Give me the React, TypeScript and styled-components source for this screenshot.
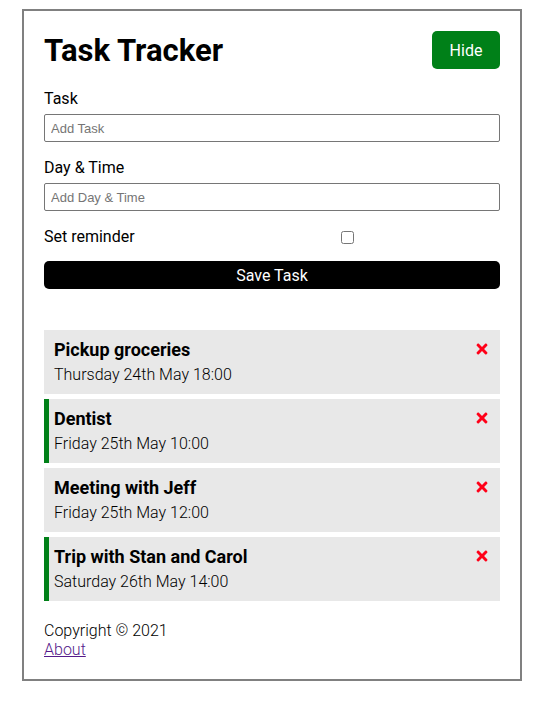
import React, { useState } from "react";
import styled, { createGlobalStyle } from "styled-components";
import { FaTimes } from "react-icons/fa";

const GlobalStyle = createGlobalStyle`
  body {
    margin: 0;
    font-family: Roboto, "Liberation Sans", sans-serif;
    background: #fff;
  }
  * {
    box-sizing: border-box;
  }
`;

type Task = {
  id: number;
  text: string;
  day: string;
  reminder: boolean;
};

const initialTasks: Task[] = [
  { id: 1, text: "Pickup groceries", day: "Thursday 24th May 18:00", reminder: false },
  { id: 2, text: "Dentist", day: "Friday 25th May 10:00", reminder: true },
  { id: 3, text: "Meeting with Jeff", day: "Friday 25th May 12:00", reminder: false },
  { id: 4, text: "Trip with Stan and Carol", day: "Saturday 26th May 14:00", reminder: true },
];

const App: React.FC = () => {
  const [tasks, setTasks] = useState<Task[]>(initialTasks);

  const deleteTask = (id: number) => {
    setTasks(tasks.filter((task) => task.id !== id));
  };

  return (
    <>
      <GlobalStyle />
      <Container>
        <Header>
          <Title>Task Tracker</Title>
          <HideButton>Hide</HideButton>
        </Header>
        <Form onSubmit={(e) => e.preventDefault()}>
          <FormControl>
            <Label>Task</Label>
            <Input type="text" placeholder="Add Task" />
          </FormControl>
          <FormControl>
            <Label>Day &amp; Time</Label>
            <Input type="text" placeholder="Add Day &amp; Time" />
          </FormControl>
          <CheckControl>
            <CheckLabel>Set reminder</CheckLabel>
            <Checkbox type="checkbox" />
          </CheckControl>
          <SaveButton type="submit">Save Task</SaveButton>
        </Form>
        <TaskList>
          {tasks.map((task) => (
            <TaskItem key={task.id} $reminder={task.reminder}>
              <TaskTitle>
                {task.text}
                <DeleteIcon onClick={() => deleteTask(task.id)} />
              </TaskTitle>
              <TaskDay>{task.day}</TaskDay>
            </TaskItem>
          ))}
        </TaskList>
        <Footer>
          <p>Copyright &copy; 2021</p>
          <FooterLink href="#about">About</FooterLink>
        </Footer>
      </Container>
    </>
  );
};

const Container = styled.div`
  width: 500px;
  margin: 9px 0 20px 22px;
  padding: 20px;
  border: 2px solid #808080;
`;

const Header = styled.header`
  display: flex;
  justify-content: space-between;
  align-items: center;
  height: 38px;
  margin-bottom: 20px;
`;

const Title = styled.h1`
  margin: 0;
  font-size: 31px;
  font-weight: 700;
  color: #000;
`;

const HideButton = styled.button`
  width: 68px;
  height: 38px;
  border: none;
  border-radius: 5px;
  background: #008018;
  color: #fff;
  font-family: Roboto, sans-serif;
  font-size: 16px;
  cursor: pointer;
`;

const Form = styled.form`
  display: flex;
  flex-direction: column;
`;

const FormControl = styled.div`
  display: flex;
  flex-direction: column;
  gap: 5px;
  margin-bottom: 16px;
`;

const Label = styled.label`
  font-size: 16px;
  line-height: 20px;
  color: #000;
`;

const Input = styled.input`
  height: 28px;
  padding: 0 6px;
  border: 1px solid #767676;
  border-radius: 2px;
  font-family: "Liberation Sans", Arial, sans-serif;
  font-size: 13px;

  &::placeholder {
    color: #757575;
  }
`;

const CheckControl = styled.div`
  display: flex;
  align-items: center;
  height: 20px;
`;

const CheckLabel = styled.label`
  flex: 1 1 0;
  font-size: 16px;
  line-height: 20px;
`;

const Checkbox = styled.input`
  flex: 2 1 0;
  height: 13px;
  margin: 0 3px 0 4px;
`;

const SaveButton = styled.button`
  height: 28px;
  margin-top: 14px;
  border: none;
  border-radius: 5px;
  background: #000;
  color: #fff;
  font-family: Roboto, sans-serif;
  font-size: 16px;
  cursor: pointer;
`;

const TaskList = styled.div`
  display: flex;
  flex-direction: column;
  gap: 5px;
  margin-top: 41px;
`;

const TaskItem = styled.div<{ $reminder: boolean }>`
  height: 64px;
  padding: 9px 10px 0 5px;
  background: #e8e8e8;
  border-left: 5px solid ${({ $reminder }) => ($reminder ? "#008018" : "transparent")};
  cursor: pointer;
`;

const TaskTitle = styled.h3`
  display: flex;
  justify-content: space-between;
  align-items: center;
  margin: 0;
  font-size: 18px;
  line-height: 22px;
  font-weight: 700;
  color: #000;
`;

const DeleteIcon = styled(FaTimes)`
  color: #ff0018;
  font-size: 16px;
  margin-top: -2px;
  cursor: pointer;
`;

const TaskDay = styled.p`
  margin: 4px 0 0;
  font-size: 16px;
  line-height: 20px;
  font-weight: 300;
  color: #000;
`;

const Footer = styled.footer`
  margin-top: 20px;
  font-size: 16px;
  line-height: 19px;
  font-weight: 300;

  p {
    margin: 0;
  }
`;

const FooterLink = styled.a`
  color: #551a8b;
`;

export default App;
